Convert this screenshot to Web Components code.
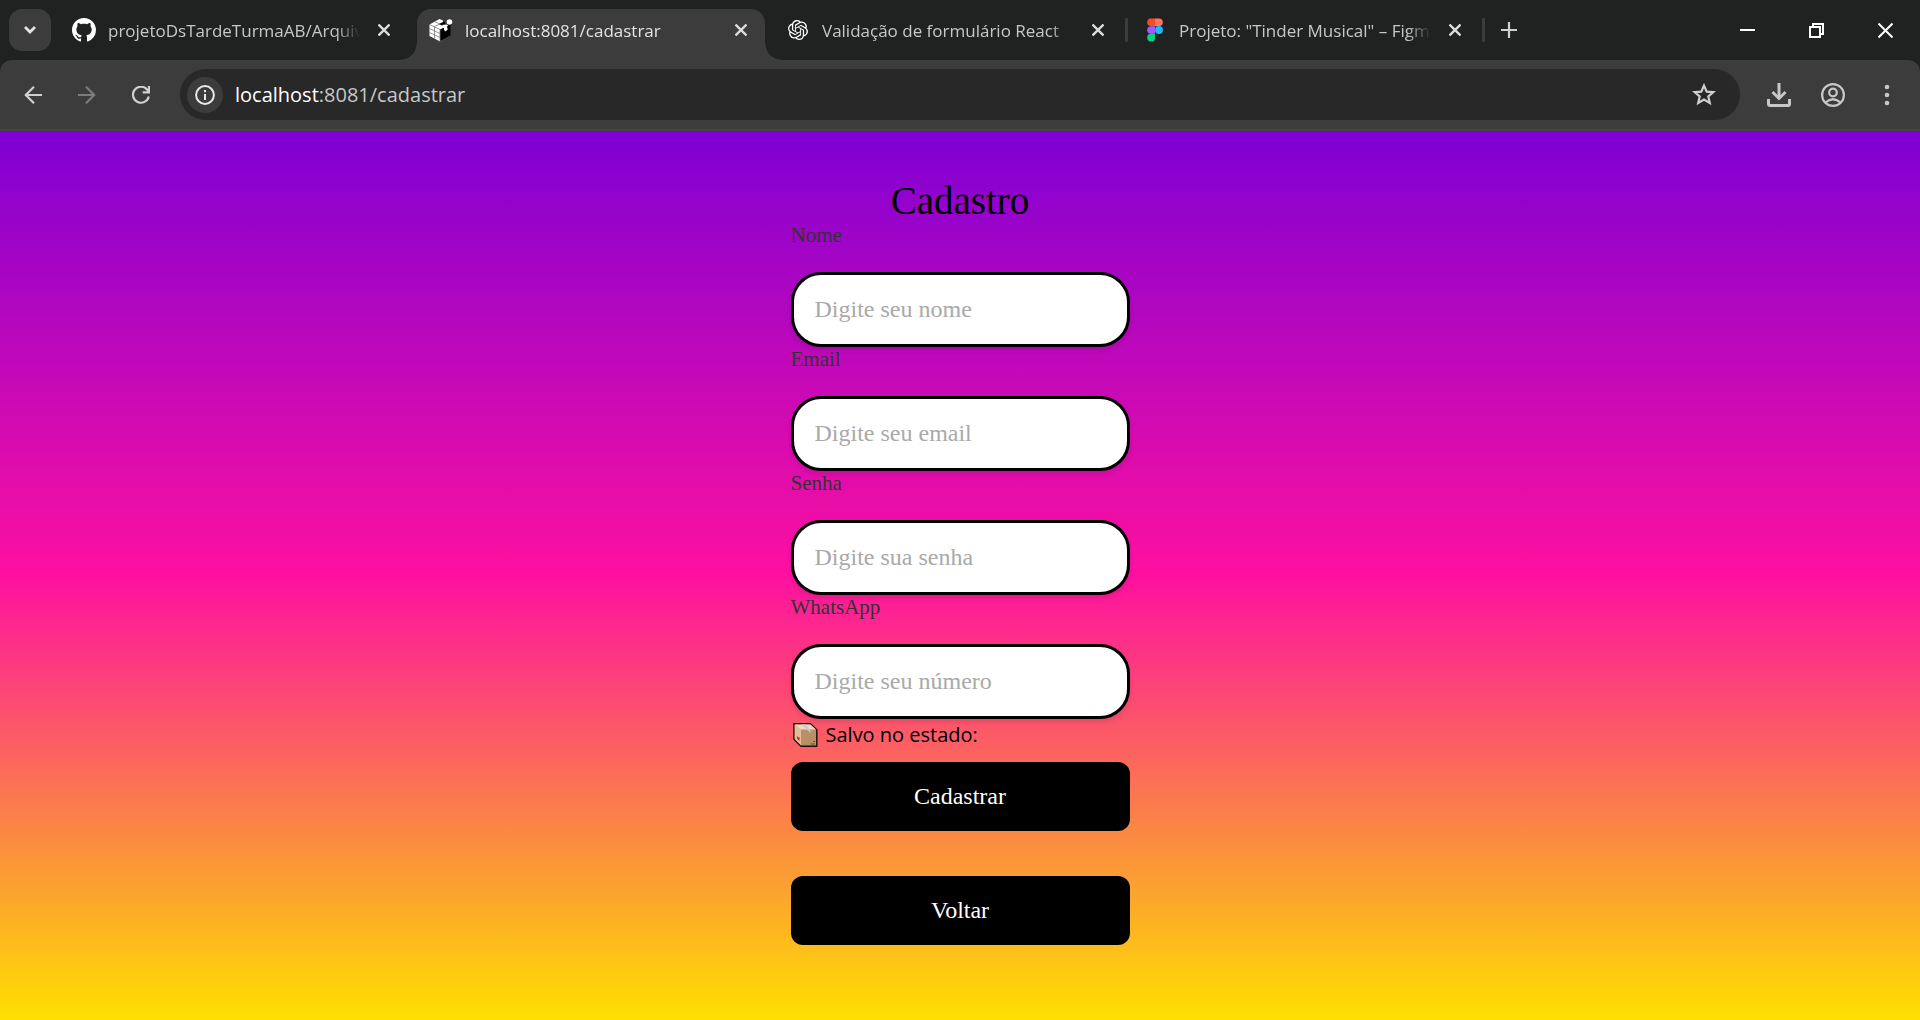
<!DOCTYPE html>
<html lang="pt-BR">
<head>
<meta charset="utf-8">
<title>localhost:8081/cadastrar</title>
<style>
  html, body { margin: 0; min-height: 100%; background: #202221; }
  body { font-family: "Open Sans", "Noto Sans", sans-serif; }
</style>
</head>
<body>
<browser-window></browser-window>

<template id="tpl-window">
  <style>
    :host { display: flex; flex-direction: column; min-height: 100vh; background: #202221; }
    header { display: flex; height: 60px; box-sizing: border-box; align-items: stretch; padding-left: 9px; }
    .search { width: 42px; height: 42px; margin: 9px 9px 0 0; border: 0; border-radius: 13px; background: #3c3c3c; padding: 0; display: grid; place-items: center; flex: none; }
    nav { display: flex; flex: 0 1 auto; min-width: 0; padding-top: 9px; }
    .plus { width: 42px; height: 42px; margin-top: 9px; border: 0; background: none; padding: 0; display: grid; place-items: center; flex: none; }
    .controls { display: flex; margin-left: auto; flex: none; }
    .controls button { width: 69px; height: 60px; border: 0; background: none; padding: 0; display: grid; place-items: center; }
    svg { display: block; }
    sign-up-page { flex: 1; }
  </style>
  <header>
    <button class="search" aria-label="Pesquisar guias"><svg width="14" height="10" viewBox="0 0 14 10"><path d="M2 2l5 5 5-5" fill="none" stroke="#e3e3e3" stroke-width="2.8"/></svg></button>
    <nav>
      <browser-tab label="projetoDsTardeTurmaAB/Arquivos">
        <svg width="24" height="24" viewBox="0 0 16 16" fill="#fff"><path d="M8 0C3.58 0 0 3.58 0 8c0 3.54 2.29 6.53 5.47 7.59.4.07.55-.17.55-.38 0-.19-.01-.82-.01-1.49-2.01.37-2.53-.49-2.69-.94-.09-.23-.48-.94-.82-1.13-.28-.15-.68-.52-.01-.53.63-.01 1.08.58 1.23.82.72 1.21 1.87.87 2.33.66.07-.52.28-.87.51-1.07-1.78-.2-3.64-.89-3.64-3.95 0-.87.31-1.59.82-2.15-.08-.2-.36-1.02.08-2.12 0 0 .67-.21 2.2.82.64-.18 1.32-.27 2-.27s1.36.09 2 .27c1.53-1.04 2.2-.82 2.2-.82.44 1.1.16 1.92.08 2.12.51.56.82 1.27.82 2.15 0 3.07-1.87 3.75-3.65 3.95.29.25.54.73.54 1.48 0 1.07-.01 1.93-.01 2.2 0 .21.15.46.55.38A8.01 8.01 0 0 0 16 8c0-4.42-3.58-8-8-8z"/></svg>
      </browser-tab>
      <browser-tab active label="localhost:8081/cadastrar">
        <svg width="24" height="24" viewBox="0 0 24 24"><path d="M.5 6.5L10.500 1l3.500 1.500v3l3 3 4 1v8L11 23.500.5 18z" fill="#fff"/><path d="M11 11.500l4-2v3l3-1.500v-3l3.500-2v11.500L11 23.500z" fill="#000"/><path d="M6 3.800l4.500 2M.5 6.500L11 11.500v12M5.500 9v11.500M.5 10.500l10.500 5M.5 14.500l10.500 5M5.500 8.500L11 6" fill="none" stroke="#777" stroke-width=".8"/><path d="M10 6l5-2.500 1.500 2-3.500 2z" fill="#000"/><path d="M12 8.500l5-2 3 1-5 2.500z" fill="#fff"/><path d="M18.500 7l4.500-4v3l-3 3z" fill="#000"/><path d="M15.500 11l3-1.500V12L16 13.500z" fill="#fff"/><circle cx="20.500" cy="4" r="2.800" fill="#fff"/></svg>
      </browser-tab>
      <browser-tab divided label="Validação de formulário React">
        <svg width="20" height="20" viewBox="0 0 24 24" fill="#fff"><path d="M22.2819 9.8211a5.9847 5.9847 0 0 0-.5157-4.9108 6.0462 6.0462 0 0 0-6.5098-2.9A6.0651 6.0651 0 0 0 4.9807 4.1818a5.9847 5.9847 0 0 0-3.9977 2.9 6.0462 6.0462 0 0 0 .7427 7.0966 5.98 5.98 0 0 0 .511 4.9107 6.051 6.051 0 0 0 6.5146 2.9001A5.9847 5.9847 0 0 0 13.2599 24a6.0557 6.0557 0 0 0 5.7718-4.2058 5.9894 5.9894 0 0 0 3.9977-2.9001 6.0557 6.0557 0 0 0-.7475-7.0729zm-9.022 12.6081a4.4755 4.4755 0 0 1-2.8764-1.0408l.1419-.0804 4.7783-2.7582a.7948.7948 0 0 0 .3927-.6813v-6.7369l2.02 1.1686a.071.071 0 0 1 .038.052v5.5826a4.504 4.504 0 0 1-4.4945 4.4944zm-9.6607-4.1254a4.4708 4.4708 0 0 1-.5346-3.0137l.142.0852 4.783 2.7582a.7712.7712 0 0 0 .7806 0l5.8428-3.3685v2.3324a.0804.0804 0 0 1-.0332.0615L9.74 19.9502a4.4992 4.4992 0 0 1-6.1408-1.6464zM2.3408 7.8956a4.485 4.485 0 0 1 2.3655-1.9728V11.6a.7664.7664 0 0 0 .3879.6765l5.8144 3.3543-2.0201 1.1685a.0757.0757 0 0 1-.071 0l-4.8303-2.7865A4.504 4.504 0 0 1 2.3408 7.872zm16.5963 3.8558L13.1038 8.364 15.1192 7.2a.0757.0757 0 0 1 .071 0l4.8303 2.7913a4.4944 4.4944 0 0 1-.6765 8.1042v-5.6772a.79.79 0 0 0-.407-.667zm2.0107-3.0231l-.142-.0852-4.7735-2.7818a.7759.7759 0 0 0-.7854 0L9.409 9.2297V6.8974a.0662.0662 0 0 1 .0284-.0615l4.8303-2.7866a4.4992 4.4992 0 0 1 6.6802 4.66zM8.3065 12.863l-2.02-1.1638a.0804.0804 0 0 1-.038-.0567V6.0742a4.4992 4.4992 0 0 1 7.3757-3.4537l-.142.0805L8.704 5.459a.7948.7948 0 0 0-.3927.6813zm1.0976-2.3654l2.602-1.4998 2.6069 1.4998v2.9994l-2.5974 1.4997-2.6067-1.4997Z"/></svg>
      </browser-tab>
      <browser-tab divided label='Projeto: "Tinder Musical" – Figma'>
        <svg width="16" height="24" viewBox="0 0 16 24"><path d="M8 .5H4a3.830 3.830 0 0 0 0 7.660h4z" fill="#f24e1e"/><path d="M8 .5h4a3.830 3.830 0 0 1 0 7.660H8z" fill="#ff7262"/><path d="M8 8.160H4a3.830 3.830 0 0 0 0 7.660h4z" fill="#a259ff"/><circle cx="12" cy="12" r="3.900" fill="#1abcfe"/><path d="M4 15.820h4v3.830a3.900 3.900 0 1 1-4-3.830z" fill="#0acf83"/></svg>
      </browser-tab>
    </nav>
    <button class="plus" aria-label="Nova guia"><svg width="16" height="16" viewBox="0 0 16 16"><path d="M8 0v16M0 8h16" stroke="#d0d0d0" stroke-width="2.200"/></svg></button>
    <div class="controls">
      <button aria-label="Minimizar"><svg width="15" height="15" viewBox="0 0 15 15"><path d="M0 7h15" stroke="#fff" stroke-width="2"/></svg></button>
      <button aria-label="Restaurar"><svg width="15" height="15" viewBox="0 0 15 15" fill="none" stroke="#fff" stroke-width="2"><path d="M1 4h10v10H1zM4 4V1h10v10h-3"/></svg></button>
      <button aria-label="Fechar"><svg width="15" height="15" viewBox="0 0 15 15"><path d="M.5.5l14 14M14.500.5l-14 14" stroke="#fff" stroke-width="2"/></svg></button>
    </div>
  </header>
  <browser-toolbar></browser-toolbar>
  <sign-up-page></sign-up-page>
</template>

<template id="tpl-tab">
  <style>
    :host { display: flex; flex: 0 1 348px; width: 348px; min-width: 0; height: 51px; margin-right: 9px; position: relative; color: #c7c7c7; box-sizing: border-box; padding: 0 12px 9px; align-items: center; gap: 12px; border-radius: 14px 14px 0 0; }
    :host([active]) { background: #3c3c3c; color: #e3e3e3; }
    :host([active])::before, :host([active])::after { content: ""; position: absolute; bottom: 0; width: 16px; height: 16px; }
    :host([active])::before { right: 100%; background: radial-gradient(circle at 0 0, transparent 15px, #3c3c3c 16px); }
    :host([active])::after { left: 100%; background: radial-gradient(circle at 100% 0, transparent 15px, #3c3c3c 16px); }
    :host([divided])::after { content: ""; position: absolute; left: calc(100% + 3px); top: 9px; width: 3px; height: 24px; border-radius: 1px; background: #3c3c3c; }
    .icon { width: 24px; height: 24px; display: grid; place-items: center; flex: none; }
    .title { flex: 1; min-width: 0; overflow: hidden; white-space: nowrap; font-size: 17px; line-height: 24px; padding-top: 2px; -webkit-mask-image: linear-gradient(90deg, #000 calc(100% - 24px), transparent); mask-image: linear-gradient(90deg, #000 calc(100% - 24px), transparent); }
    button { width: 24px; height: 24px; padding: 0; border: 0; background: none; color: inherit; display: grid; place-items: center; flex: none; }
    ::slotted(svg) { display: block; }
  </style>
  <span class="icon"><slot></slot></span>
  <span class="title"></span>
  <button aria-label="Fechar guia"><svg width="12" height="12" viewBox="0 0 12 12"><path d="M.5.5l11 11M11.500.5l-11 11" stroke="#dcdcdc" stroke-width="2.300"/></svg></button>
</template>

<template id="tpl-toolbar">
  <style>
    :host { display: flex; align-items: center; height: 71px; box-sizing: border-box; padding: 0 6px; background: #3c3c3c; border-bottom: 2px solid #444; border-radius: 12px 12px 0 0; }
    button { border: 0; background: none; padding: 0; display: grid; place-items: center; width: 54px; height: 42px; flex: none; }
    .bar { flex: 1; min-width: 0; display: flex; align-items: center; height: 51px; margin: 0 12px; border-radius: 26px; background: #282828; }
    .info { width: 36px; height: 36px; margin: 0 12px 0 7px; border-radius: 50%; background: #3c3c3c; }
    .url { flex: 1; min-width: 0; font-size: 20px; line-height: 28px; color: #c7c7c7; white-space: nowrap; overflow: hidden; }
    .url b { font-weight: 400; color: #fff; }
    .star { width: 36px; margin-right: 18px; }
    svg { display: block; }
  </style>
  <button aria-label="Voltar"><svg width="18" height="18" viewBox="0 0 18 18" fill="none" stroke="#d0d0d0" stroke-width="2.200"><path d="M18 9H2M10 .8L1.800 9l8.200 8.200"/></svg></button>
  <button aria-label="Avançar"><svg width="18" height="18" viewBox="0 0 18 18" fill="none" stroke="#7c7c7c" stroke-width="2.200"><path d="M0 9h16M8 .8L16.200 9 8 17.200"/></svg></button>
  <button aria-label="Recarregar"><svg width="18" height="18" viewBox="0 0 18 18" fill="none" stroke="#d0d0d0" stroke-width="2.200"><path d="M16.800 10.500A8 8 0 1 1 15 3.400l1.500 1.900M17 0v6.300h-6.300"/></svg></button>
  <div class="bar">
    <button class="info" aria-label="Informações do site"><svg width="20" height="20" viewBox="0 0 20 20" fill="none" stroke="#e8e8e8"><circle cx="10" cy="10" r="8.900" stroke-width="2"/><path d="M10 9v6M10 5v2.200" stroke-width="2"/></svg></button>
    <span class="url"><b>localhost</b>:8081/cadastrar</span>
    <button class="star" aria-label="Adicionar aos favoritos"><svg width="24" height="23" viewBox="0 0 24 23"><path d="M12 2.600l2.700 6 6.600.6-5 4.300 1.500 6.500L12 16.600 6.200 20l1.500-6.500-5-4.300 6.600-.6z" fill="none" stroke="#d0d0d0" stroke-width="2.200"/></svg></button>
  </div>
  <button aria-label="Downloads"><svg width="24" height="24" viewBox="0 0 24 24" fill="none" stroke="#c7c7c7" stroke-width="3"><path d="M12 0v15M5.500 9l6.500 6.500L18.500 9M1.500 16v5q0 1.500 1.500 1.500h18q1.500 0 1.500-1.500v-5"/></svg></button>
  <button aria-label="Perfil"><svg width="24" height="24" viewBox="0 0 24 24" fill="none" stroke="#c7c7c7" stroke-width="2.200"><circle cx="12" cy="12" r="10.900"/><circle cx="12" cy="9.500" r="3.800"/><path d="M4.500 19.500q7.500-6.500 15 0"/></svg></button>
  <button aria-label="Menu"><svg width="6" height="22" viewBox="0 0 6 22" fill="#c7c7c7"><circle cx="3" cy="3" r="2.300"/><circle cx="3" cy="11" r="2.300"/><circle cx="3" cy="19" r="2.300"/></svg></button>
</template>

<template id="tpl-page">
  <style>
    :host { display: block; box-sizing: border-box; padding: 48px 16px; background: linear-gradient(#7f00d4, #fe10a0 50%, #fb9d33 84%, #ffe000); font-family: "Liberation Serif", "Times New Roman", serif; }
    form { display: flex; flex-direction: column; max-width: 339px; margin: 0 auto; }
    h1 { margin: 0; font-size: 39px; line-height: 44px; font-weight: 400; text-align: center; color: #000; }
    .state { display: flex; align-items: center; gap: 8px; margin: 0 0 11px; padding-left: 2px; height: 32px; font: 20px/28px "Open Sans", "Noto Sans", sans-serif; color: #000; }
    .state svg { display: block; flex: none; }
    action-button + action-button { margin-top: 45px; }
  </style>
  <form>
    <h1>Cadastro</h1>
    <form-field label="Nome" hint="Digite seu nome" kind="text"></form-field>
    <form-field label="Email" hint="Digite seu email" kind="email"></form-field>
    <form-field label="Senha" hint="Digite sua senha" kind="password"></form-field>
    <form-field label="WhatsApp" hint="Digite seu número" kind="tel"></form-field>
    <p class="state">
      <svg width="25" height="24" viewBox="0 0 25 24"><path d="M1 .8h16.500l6.300 6v16.400H8l-7-7z" fill="#b98f67" stroke="#1c1310" stroke-width="1.500"/><path d="M1.700 1.600L8 6.500v16L1.700 16z" fill="#e3bd98"/><path d="M1.700 1.600h15.600L23 6.500H8z" fill="#f6d5c3"/><path d="M8.500 1.600h4l5 5.400v3l-3-3z" fill="#c6cbd0"/><path d="M4 13l1.300 1.500L6.500 14v4L4 15.500z" fill="#e81224"/><path d="M20 18.500h2M17.500 21h4.500" stroke="#70523c" stroke-width="1.200"/></svg>
      <span>Salvo no estado:</span>
    </p>
    <action-button>Cadastrar</action-button>
    <action-button>Voltar</action-button>
  </form>
</template>

<template id="tpl-field">
  <style>
    :host { display: flex; flex-direction: column; gap: 25px; }
    label { font-size: 21px; line-height: 24px; color: #333; }
    input { box-sizing: border-box; width: 100%; height: 75px; margin: 0; padding: 0 21px; border: 3px solid #000; border-radius: 30px; background: #fff; font: 24px/28px "Liberation Serif", "Times New Roman", serif; color: #000; box-shadow: 0 3px 5px rgba(0, 0, 0, .1); outline: 0; }
    input::placeholder { color: #a9a9a9; opacity: 1; }
  </style>
  <label for="box"></label>
  <input id="box">
</template>

<template id="tpl-button">
  <style>
    :host { display: block; }
    button { display: block; width: 100%; height: 69px; padding: 0 0 2px; border: 0; border-radius: 12px; background: #000; color: #fff; font: 24px/28px "Liberation Serif", "Times New Roman", serif; }
  </style>
  <button type="button"><slot></slot></button>
</template>

<script>
  class BaseElement extends HTMLElement {
    constructor() {
      super();
      const tpl = document.getElementById(this.constructor.template);
      this.attachShadow({ mode: "open" }).append(tpl.content.cloneNode(true));
    }
  }
  class BrowserTab extends BaseElement {
    static template = "tpl-tab";
    connectedCallback() {
      this.shadowRoot.querySelector(".title").textContent = this.getAttribute("label");
    }
  }
  class BrowserToolbar extends BaseElement { static template = "tpl-toolbar"; }
  class FormField extends BaseElement {
    static template = "tpl-field";
    connectedCallback() {
      const input = this.shadowRoot.querySelector("input");
      this.shadowRoot.querySelector("label").textContent = this.getAttribute("label");
      input.type = this.getAttribute("kind");
      input.placeholder = this.getAttribute("hint");
    }
  }
  class ActionButton extends BaseElement { static template = "tpl-button"; }
  class SignUpPage extends BaseElement { static template = "tpl-page"; }
  class BrowserWindow extends BaseElement { static template = "tpl-window"; }

  customElements.define("browser-tab", BrowserTab);
  customElements.define("browser-toolbar", BrowserToolbar);
  customElements.define("form-field", FormField);
  customElements.define("action-button", ActionButton);
  customElements.define("sign-up-page", SignUpPage);
  customElements.define("browser-window", BrowserWindow);
</script>
</body>
</html>
